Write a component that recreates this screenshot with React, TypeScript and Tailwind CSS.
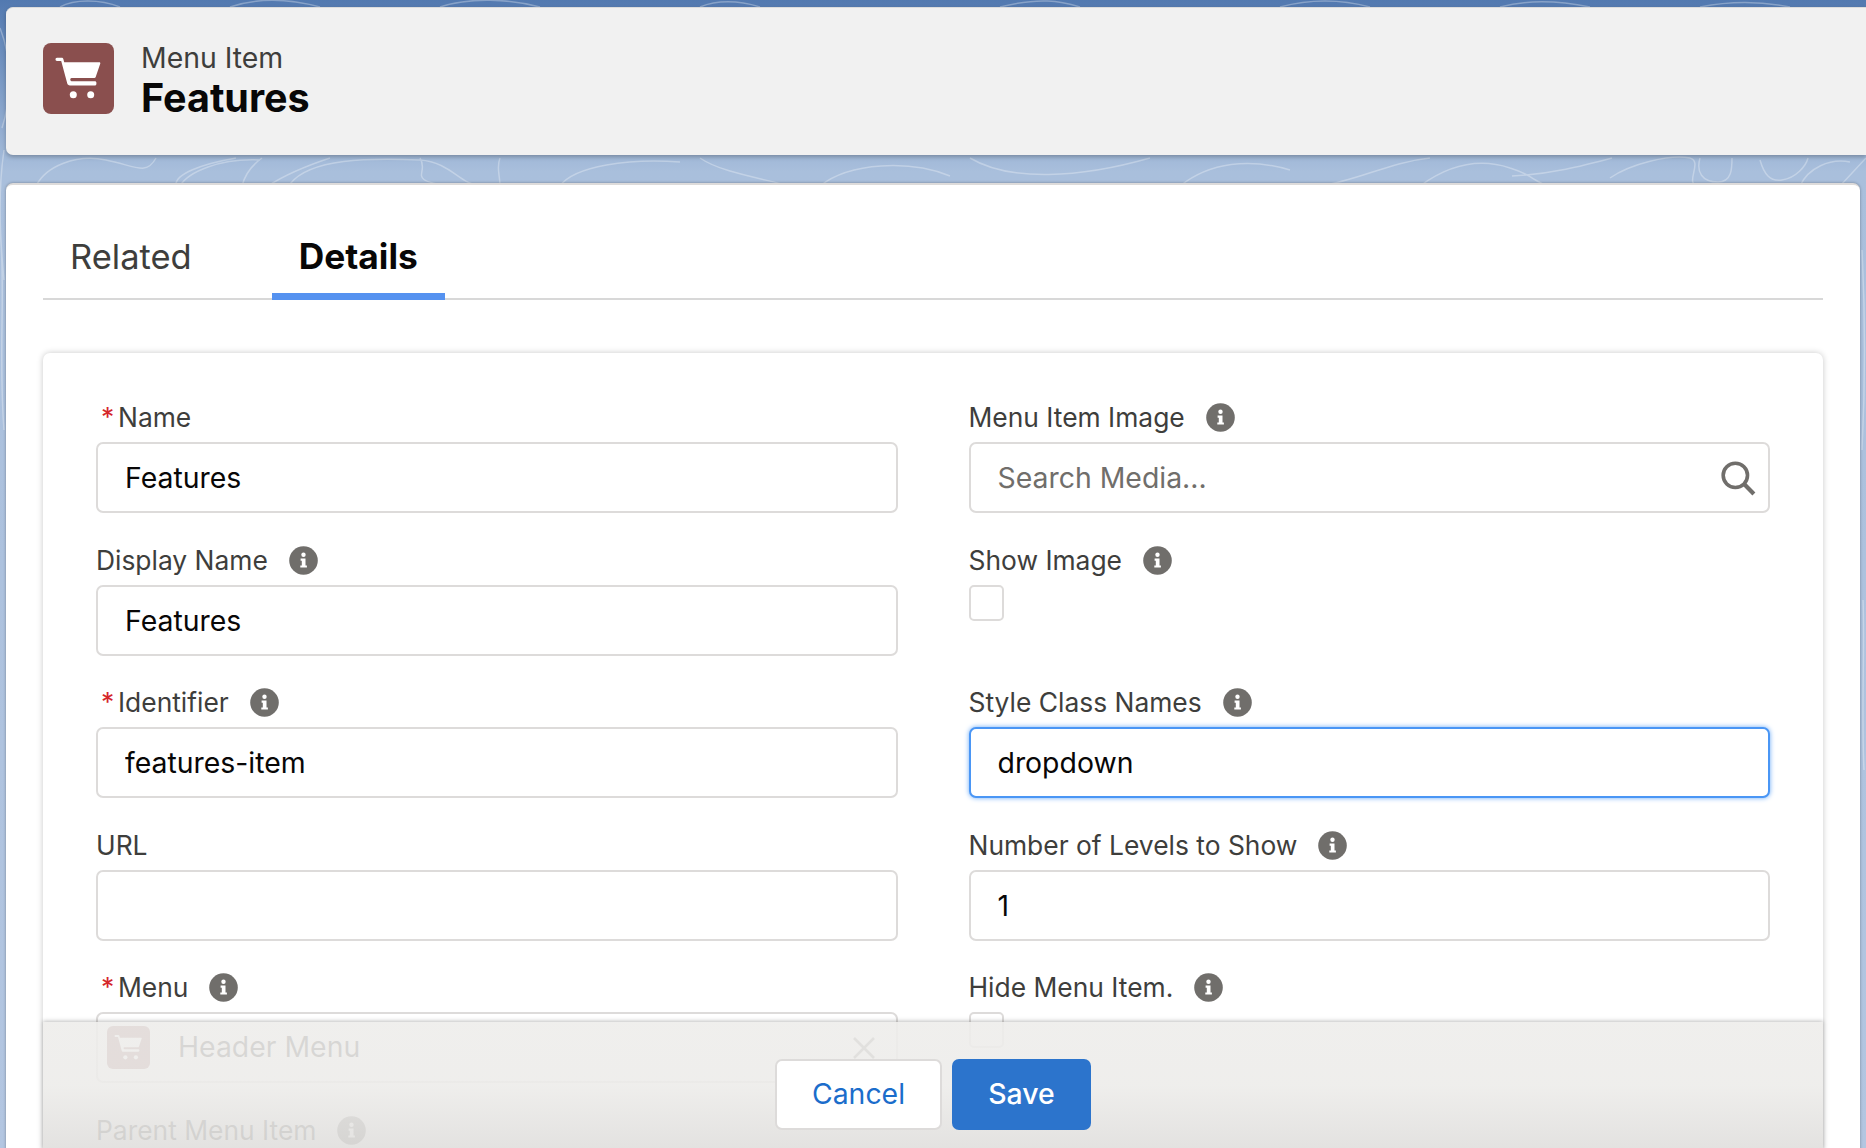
import React from "react";

const Cart = ({ className }: { className?: string }) => (
  <svg viewBox="0 0 71 71" className={className} fill="#fff">
    <path d="M14 14.8h4.5c1 0 1.6.5 1.9 1.4l.8 3h35.1c.8 0 1.2.6 1 1.3l-4.6 13.6c-.2.6-.7 1-1.4 1H28.5c-1.6 0-1.6 3.1 0 3.1h23.3c1 0 1.6.7 1.6 1.5v1.3c0 .9-.7 1.5-1.6 1.5H27c-1.5 0-2.5-.9-2.8-2.2L18.2 18h-4.2c-2 0-2-3.2 0-3.2z" />
    <circle cx="30.3" cy="51.7" r="3.5" />
    <circle cx="47.7" cy="51.7" r="3.5" />
  </svg>
);

const Info = ({ className = "" }: { className?: string }) => (
  <svg viewBox="0 0 29 29" className={`-mt-[1px] h-[29px] w-[29px] shrink-0 ${className}`}>
    <circle cx="14.5" cy="14.5" r="14.3" fill="#706e6b" />
    <circle cx="14.5" cy="8.7" r="2.2" fill="#fff" />
    <path d="M11.6 12.6h4.9v6.9h1.4v2.1h-6.6v-2.1h1.5v-4.8h-1.2z" fill="#fff" />
  </svg>
);

const Label = ({ text, required, info }: { text: string; required?: boolean; info?: boolean }) => (
  <div className="flex h-[48px] items-center text-[26.4px] text-[#3e3e3c]">
    {required && <span className="w-[22px] pl-[5px] text-[#d5262b]">*</span>}
    <span>{text}</span>
    {info && <Info className="ml-[21px]" />}
  </div>
);

const TextField = ({ value, placeholder, focused }: { value?: string; placeholder?: string; focused?: boolean }) => (
  <input
    readOnly
    value={value ?? ""}
    placeholder={placeholder}
    className={
      focused
        ? "h-[71px] w-full rounded-[7px] border-2 border-[#4a96f5] bg-white px-[27px] text-[28.4px] text-[#080707] shadow-[0_0_5px_#6aaaf7] outline-none"
        : "h-[71px] w-full rounded-[7px] border-2 border-[#dddbda] bg-white px-[27px] text-[28.4px] text-[#080707] outline-none placeholder:text-[#706e6b]"
    }
  />
);

const Check = () => <div className="h-[36px] w-[35px] rounded-[5px] border-2 border-[#dddbda] bg-white" />;

const Field = ({ children }: { children: React.ReactNode }) => <div className="flex min-w-0 flex-col">{children}</div>;

export default function App() {
  return (
    <div className="relative h-[1148px] w-full overflow-hidden bg-gradient-to-b from-[#5279b0] via-[#a9bfdc] via-15% to-[#b3c6e1] font-['Inter','Liberation_Sans',sans-serif]">
      <svg className="absolute inset-0 h-full w-full" viewBox="0 0 1866 1148" fill="none" stroke="#fff" strokeOpacity="0.3" strokeWidth="1.5">
        <path d="M36 186c10-20 40-32 70-26 30 6 40 16 50-2M180 186c8-14 40-28 80-26M262 158c-14 10-18 20-20 28M330 158c-30 10-50 20-62 28M176 186c-2-12 26-22 60-28M290 184c20-26 80-26 130-24 30 2 40 24 60 26M420 158c10 16-16 22 30 28M500 186c0-12-4-18 0-28M560 186c14-20 70-28 120-24M700 158c20 14 60 20 90 28M820 186c30-24 90-26 130-10M970 158c40 24 110 20 180 0M1180 186c30-24 70-28 110-16M1320 186c40-6 70-24 110-28M1420 186c30-22 60-28 90-18 26 8 22 14 40 18M1512 176c40-2 70-10 100-18M1610 178c20-14 60-24 80-20 14 4-8 28 10 28M1700 158c-4 14 2 24 18 24 14 0 14-14 14-24M1760 160c4 14 10 22 22 20 14-2 24-14 26-22M1800 186c8-18 30-28 50-24M1840 186l26-28" />
        <path d="M0 28c12 30 12 70 2 100M4 150c-6 40-4 90 0 130M0 230c6 60-2 120 4 200M1862 250c3 60 4 120 0 200M1863 600c2 50-2 110 1 170" />
        <path d="M60 7c14-8 40-8 60 0M230 7c30-10 60-8 90 0M440 7c30-10 70-8 100 0M700 7c20-8 40-6 60 0M1000 7c40-10 60-6 80 0M1280 7c30-8 60-8 90 0M1500 7c30-8 60-6 90 0M1700 7c30-6 60-6 90 0" />
      </svg>

      <div className="relative flex flex-col pl-[6px] pt-[7px]">
        <header className="flex h-[148px] items-center rounded-l-[7px] border-t border-[#dcdcdc] bg-[#f1f1f1] pb-[7px] pl-[37px] shadow-[0_2px_4px_rgba(0,0,0,0.25)]">
          <div className="h-[71px] w-[71px] rounded-[8px] bg-[#8a4f4e]">
            <Cart className="h-[71px] w-[71px]" />
          </div>
          <div className="ml-[27px] mt-[4px] flex flex-col">
            <span className="text-[28.4px] leading-[36px] text-[#3e3e3c]">Menu Item</span>
            <span className="text-[39.5px] font-bold leading-[44px] text-[#080707]">Features</span>
          </div>
        </header>

        <main className="relative mr-[6px] mt-[28px] h-[1000px] rounded-[7px] border-t-2 border-[#dddbda] bg-white px-[37px] shadow-[0_0_3px_rgba(0,0,0,0.35)]">
          <nav className="flex h-[115px] items-end border-b-2 border-[#d8d8d8]">
            <div className="flex h-[80px] items-center px-[27px] pb-[2px] text-[34.5px] text-[#3e3e3c]">Related</div>
            <div className="relative -mb-[2px] ml-[53px] flex h-[82px] items-center border-b-[7px] border-[#5592f0] px-[27px] pt-[4px] text-[35.3px] font-bold text-[#080707]">
              Details
            </div>
          </nav>

          <section className="relative mt-[53px] h-[900px] rounded-[7px] bg-white px-[53px] pt-[41px] shadow-[0_0_6px_rgba(0,0,0,0.22)]">
            <div className="grid grid-cols-2 gap-x-[71px] gap-y-[23.5px]">
              <Field>
                <Label text="Name" required />
                <TextField value="Features" />
              </Field>
              <Field>
                <Label text="Menu Item Image" info />
                <div className="relative">
                  <TextField placeholder="Search Media..." />
                  <svg viewBox="0 0 34 34" className="absolute right-[14px] top-[18px] h-[36px] w-[36px]" fill="none" stroke="#706e6b">
                    <circle cx="14.5" cy="14.5" r="11.5" strokeWidth="3.4" />
                    <path d="M23 23l9 9" strokeWidth="4" />
                  </svg>
                </div>
              </Field>
              <Field>
                <Label text="Display Name" info />
                <TextField value="Features" />
              </Field>
              <Field>
                <Label text="Show Image" info />
                <div className="h-[71px]">
                  <Check />
                </div>
              </Field>
              <Field>
                <Label text="Identifier" required info />
                <TextField value="features-item" />
              </Field>
              <Field>
                <Label text="Style Class Names" info />
                <TextField value="dropdown" focused />
              </Field>
              <Field>
                <Label text="URL" />
                <TextField />
              </Field>
              <Field>
                <Label text="Number of Levels to Show" info />
                <TextField value="1" />
              </Field>
              <Field>
                <Label text="Menu" required info />
                <div className="flex h-[71px] items-center rounded-[7px] border-2 border-[#dddbda] bg-white pl-[9px] pr-[20px]">
                  <div className="h-[43px] w-[43px] rounded-[6px] bg-[#8a4f4e]">
                    <Cart className="h-[43px] w-[43px]" />
                  </div>
                  <span className="ml-[28px] flex-1 text-[28.4px] text-[#080707]">Header Menu</span>
                  <svg viewBox="0 0 24 24" className="h-[24px] w-[24px]" stroke="#706e6b" strokeWidth="2.6">
                    <path d="M2 2l20 20M22 2L2 22" />
                  </svg>
                </div>
              </Field>
              <Field>
                <Label text="Hide Menu Item." info />
                <div className="h-[71px]">
                  <Check />
                </div>
              </Field>
              <Field>
                <Label text="Parent Menu Item" info />
              </Field>
            </div>

            <div className="absolute inset-x-0 top-[669px] flex h-[127px] items-start justify-center gap-[10px] bg-gradient-to-b from-[#eeedebe6] via-[#edeceae6] to-[#e0dfdde6] pt-[37px] shadow-[0_-1px_4px_rgba(0,0,0,0.25)]">
              <button className="h-[71px] w-[167px] rounded-[7px] border-2 border-[#dddbda] bg-white text-[28.4px] text-[#1b6dcb]">Cancel</button>
              <button className="h-[71px] w-[139px] rounded-[7px] bg-[#2c74cc] text-[28.4px] font-medium text-white">Save</button>
            </div>
          </section>
        </main>
      </div>
    </div>
  );
}
